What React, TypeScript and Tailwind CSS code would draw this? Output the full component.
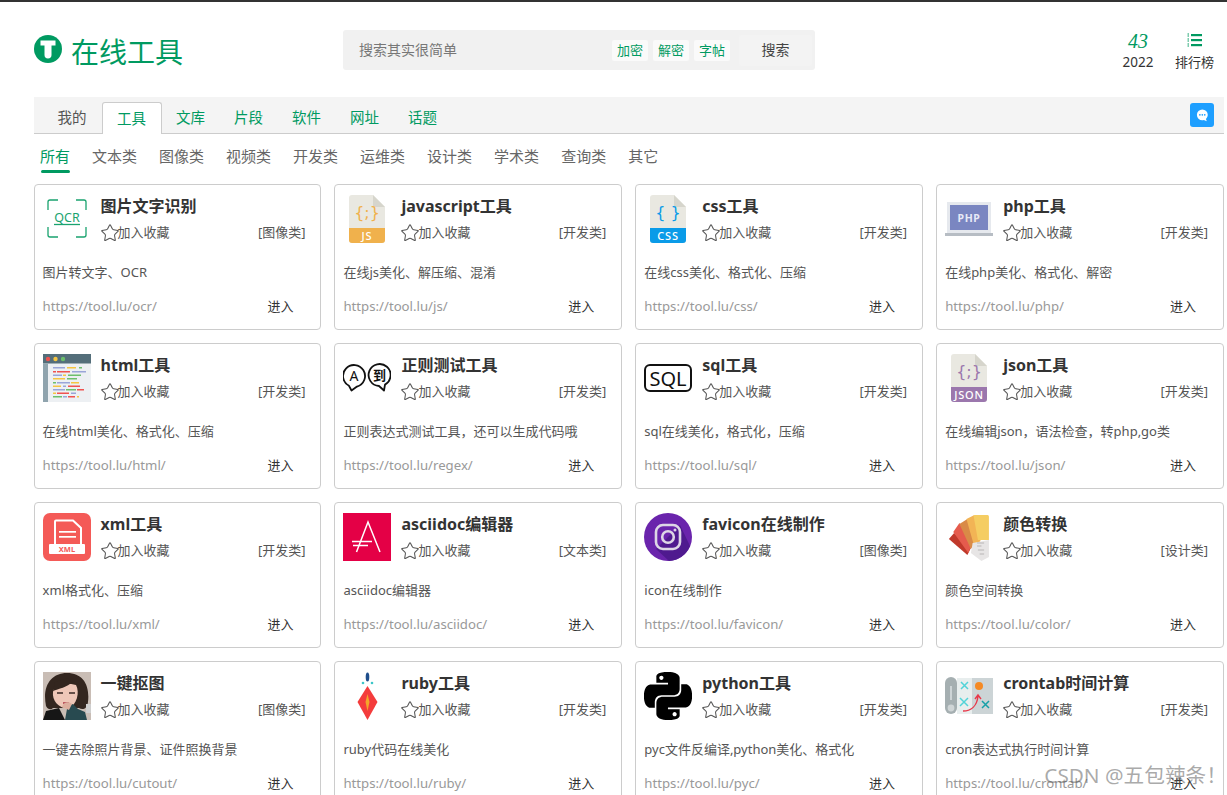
import { Star } from "lucide-react";
import { SiPython } from "react-icons/si";

const FONT = "font-['Noto_Sans','Noto_Sans_CJK_SC',sans-serif]";

const TABS = ["我的", "工具", "文库", "片段", "软件", "网址", "话题"];
const CATS = ["所有", "文本类", "图像类", "视频类", "开发类", "运维类", "设计类", "学术类", "查询类", "其它"];

function FileIcon({ bar, glyph, label, text }: { bar: string; glyph: string; label: string; text: string }) {
  return (
    <svg viewBox="0 0 48 48" className="size-12">
      <path d="M6 0H30L42 12V45a3 3 0 0 1-3 3H9a3 3 0 0 1-3-3V3a3 3 0 0 1 3-3Z" fill="#e9e8e1" />
      <path d="M30 0L42 12H30Z" fill="#d6d5cc" />
      <path d="M6 33H42V45a3 3 0 0 1-3 3H9a3 3 0 0 1-3-3Z" fill={bar} />
      <text x="24" y="23" textAnchor="middle" fontSize="16" fill={glyph} fontFamily="'DejaVu Sans',sans-serif">
        {text}
      </text>
      <text x="24" y="45" textAnchor="middle" fontSize="11" fontWeight="500" fill="#fff" letterSpacing="0.8" fontFamily="'Noto Sans',sans-serif">
        {label}
      </text>
    </svg>
  );
}

function OcrIcon() {
  return (
    <svg viewBox="0 0 48 48" className="size-12" fill="none" stroke="#1aa36f" strokeWidth="1.3">
      <path d="M5 15V7a2 2 0 0 1 2-2H15M33 5H41a2 2 0 0 1 2 2V15M5 32V40a2 2 0 0 0 2 2H15M33 42H41a2 2 0 0 0 2-2V32" />
      <text x="24" y="27" textAnchor="middle" fontSize="12.5" fill="#1aa36f" stroke="none" fontFamily="'Noto Sans',sans-serif">
        QCR
      </text>
      <path d="M11 29.5H37" />
    </svg>
  );
}

function PhpIcon() {
  return (
    <svg viewBox="0 0 48 48" className="size-12">
      <rect x="2" y="7" width="44" height="31" fill="#e6e9ee" />
      <rect x="5" y="10" width="38" height="25" fill="#7a86c1" />
      <rect x="0" y="38" width="48" height="3" fill="#b7bdc4" />
      <text x="24" y="27" textAnchor="middle" fontSize="10.5" fontWeight="700" fill="#e8eaf6" letterSpacing="0.6" fontFamily="'Noto Sans',sans-serif">
        PHP
      </text>
    </svg>
  );
}

const CODE_LINES: [number, number, string][] = [
  [10, 12, "#9aa5d8"], [24, 9, "#f5c542"], [36, 3, "#6cbf6c"],
  [10, 3, "#ef5350"], [14, 13, "#ef5350"], [29, 14, "#9aa5d8"],
  [10, 9, "#9aa5d8"], [20, 3, "#f5c542"], [25, 13, "#6cbf6c"],
  [10, 12, "#f5c542"], [24, 10, "#6cbf6c"],
  [10, 3, "#6cbf6c"], [14, 13, "#9aa5d8"], [28, 8, "#f5c542"],
  [10, 8, "#f5c542"], [20, 3, "#9aa5d8"], [25, 12, "#ef5350"],
  [10, 12, "#9aa5d8"], [23, 10, "#6cbf6c"], [34, 7, "#ef5350"],
  [10, 3, "#f5c542"], [14, 12, "#ef5350"], [28, 5, "#9aa5d8"],
  [10, 9, "#6cbf6c"], [20, 4, "#9aa5d8"], [25, 7, "#ef5350"], [34, 2, "#f5c542"],
];
const CODE_Y = [13, 13, 13, 17, 17, 17, 20.5, 20.5, 20.5, 24, 24, 28, 28, 28, 31.5, 31.5, 31.5, 35, 35, 35, 38.5, 38.5, 38.5, 42, 42, 42, 42];

function HtmlIcon() {
  return (
    <svg viewBox="0 0 48 48" className="size-12">
      <rect width="48" height="48" fill="#edf0f3" />
      <rect width="48" height="9.5" fill="#546e7a" />
      <rect y="9.5" width="5" height="38.5" fill="#90a4ae" />
      <circle cx="5" cy="5" r="2.2" fill="#ef5350" />
      <circle cx="12.5" cy="5" r="2.2" fill="#f5c542" />
      <circle cx="20" cy="5" r="2.2" fill="#6cbf6c" />
      {CODE_LINES.map(([x, w, c], i) => (
        <rect key={i} x={x} y={CODE_Y[i]} width={w} height="1.5" fill={c} />
      ))}
    </svg>
  );
}

function RegexIcon() {
  return (
    <svg viewBox="0 0 48 48" className="size-12" fill="none" stroke="#111" strokeWidth="1.8" strokeLinejoin="round">
      <path d="M6 31.8A11 11 0 1 1 14 32.6L8.5 36.5Z" />
      <path d="M36 32A11 11 0 1 1 42 30.6L41 36.5Z" />
      <text x="11" y="27" textAnchor="middle" fontSize="14" fill="#111" stroke="none" fontFamily="'Noto Sans',sans-serif">
        A
      </text>
      <text x="36.5" y="26" textAnchor="middle" fontSize="13" fontWeight="700" fill="#111" stroke="none" fontFamily="'Noto Sans CJK SC',sans-serif">
        到
      </text>
    </svg>
  );
}

function SqlIcon() {
  return (
    <svg viewBox="0 0 48 48" className="size-12">
      <rect x="1" y="11" width="46" height="26" rx="5" fill="none" stroke="#111" strokeWidth="2" />
      <text x="24" y="31.5" textAnchor="middle" fontSize="20" fill="#111" fontFamily="'Noto Sans',sans-serif">
        SQL
      </text>
    </svg>
  );
}

function XmlIcon() {
  return (
    <svg viewBox="0 0 48 48" className="size-12">
      <rect width="48" height="48" rx="7" fill="#f45a57" />
      <path d="M12 31V8.5a1 1 0 0 1 1-1H30L38 15V31" fill="none" stroke="#fff" strokeWidth="2" />
      <rect x="16" y="18" width="17" height="1.7" fill="#fff" />
      <rect x="16" y="23" width="17" height="1.7" fill="#fff" />
      <rect x="6" y="31" width="36" height="10" rx="1" fill="#fff" />
      <text x="24" y="39" textAnchor="middle" fontSize="7.5" fontWeight="700" fill="#f45a57" fontFamily="'Noto Sans',sans-serif">
        XML
      </text>
    </svg>
  );
}

function AsciidocIcon() {
  return (
    <svg viewBox="0 0 48 48" className="size-12">
      <rect width="48" height="48" fill="#e40046" />
      <path d="M13.5 39L25 9L37 39M9 28.5H29M10 32.5H25" fill="none" stroke="#fff" strokeWidth="1.5" />
    </svg>
  );
}

function FaviconIcon() {
  return (
    <svg viewBox="0 0 48 48" className="size-12">
      <circle cx="24" cy="24" r="24" fill="#6a24ac" />
      <path d="M36 12L46 33A24 24 0 0 1 25 48L12 36Z" fill="#4f1a8f" />
      <rect x="12" y="12" width="24" height="24" rx="7" fill="none" stroke="#ddd6e6" strokeWidth="2.6" />
      <circle cx="24" cy="24" r="5.8" fill="none" stroke="#ddd6e6" strokeWidth="2.6" />
      <circle cx="31" cy="17" r="1.5" fill="#ddd6e6" />
    </svg>
  );
}

function ColorIcon() {
  return (
    <svg viewBox="0 0 48 48" className="size-12">
      <g transform="translate(3 0) scale(.88 1)">
        <path d="M1 26L7 20L26 35L22 42Z" fill="#c0392b" />
        <path d="M6 19L13 10L28 30L23 40Z" fill="#e55b4d" />
        <path d="M13 11L22 6L32 30L26 36Z" fill="#d98a47" />
        <path d="M21 6L30 2L37 28L30 34Z" fill="#f2b455" />
        <path d="M29 2.5a2 2 0 0 1 2-.5H45a1.5 1.5 0 0 1 1.5 1.5V27H34Z" fill="#f5cd62" />
        <path d="M28 30L46.5 27V44L38 48L26 40Z" fill="#e7e5e5" />
        <path d="M33 30H41M33 33H38M34 37H41M36 41H41" stroke="#b5b2b2" strokeWidth="1" />
      </g>
    </svg>
  );
}

function PhotoIcon() {
  return (
    <svg viewBox="0 0 48 48" className="size-12">
      <rect width="48" height="48" fill="#c9bdb5" />
      <path d="M3 34C-1 14 8 1 24 1C40 1 47 13 45 30C44 38 39 38 36 36H10C8 38 5 38 3 34Z" fill="#33261f" />
      <path d="M10 20C11 12 22 10 33 13C37 20 34 33 25 37C15 36 9 28 10 20Z" fill="#eec7b8" />
      <path d="M10 19C15 17 25 15 29 10L33 13L24 6L12 10Z" fill="#33261f" />
      <path d="M14 21H20M26 21H32" stroke="#3a2a25" strokeWidth="1.5" />
      <path d="M20 31H26" stroke="#b8505a" strokeWidth="1.8" />
      <path d="M0 48L3 39L16 36L22 48Z" fill="#161616" />
      <path d="M24 37L24 34L30 32L35 37L42 40L44 48H22Z" fill="#284a50" />
      <rect x="43" y="32" width="5" height="9" fill="#cfcfcf" />
      <path d="M19 35C20 30 26 29 29 32L26 38Z" fill="#dcae9e" />
    </svg>
  );
}

function RubyIcon() {
  return (
    <svg viewBox="0 0 48 48" className="size-12">
      <ellipse cx="24.5" cy="5" rx="1.8" ry="4.6" fill="#1f4e8c" />
      <circle cx="20" cy="11" r="1.3" fill="#3cc6c8" />
      <circle cx="29" cy="11" r="1.3" fill="#3cc6c8" />
      <path d="M24.5 14L34.5 30L24.5 48L14.5 30Z" fill="#f43c3c" />
      <path d="M24.5 22L26.5 30L24.5 39L22.5 30Z" fill="#f4a62a" />
    </svg>
  );
}

function CronIcon() {
  return (
    <svg viewBox="0 0 48 48" className="size-12">
      <rect x="0" y="5" width="12" height="37" rx="6" fill="#a5afb1" />
      <circle cx="6" cy="36" r="3.4" fill="#cfd5d6" />
      <rect x="5.3" y="14" width="1.4" height="14" fill="#dfe4e5" />
      <rect x="12" y="6" width="15" height="36" fill="#e8eeee" />
      <rect x="27" y="6" width="21" height="36" fill="#ccd4d6" />
      <circle cx="34" cy="14" r="4" fill="#f58a24" />
      <path d="M16 10L23 17M23 10L16 17M15 26L23 34M23 26L15 34" stroke="#52d3d8" strokeWidth="1.5" />
      <path d="M37 29L44 36M44 29L37 36" stroke="#17a0a8" strokeWidth="1.5" />
      <path d="M18 39C26 39 32 34 33 24M30 27L33 23L36 27" fill="none" stroke="#e8384a" strokeWidth="1.4" />
    </svg>
  );
}

interface Tool {
  name: string;
  cat: string;
  desc: string;
  url: string;
  icon: React.ReactNode;
}

const TOOLS: Tool[] = [
  { name: "图片文字识别", cat: "[图像类]", desc: "图片转文字、OCR", url: "https://tool.lu/ocr/", icon: <OcrIcon /> },
  { name: "javascript工具", cat: "[开发类]", desc: "在线js美化、解压缩、混淆", url: "https://tool.lu/js/", icon: <FileIcon bar="#f0b14c" glyph="#f0b14c" label="JS" text="{;}" /> },
  { name: "css工具", cat: "[开发类]", desc: "在线css美化、格式化、压缩", url: "https://tool.lu/css/", icon: <FileIcon bar="#0a9be8" glyph="#0a9be8" label="CSS" text="{ }" /> },
  { name: "php工具", cat: "[开发类]", desc: "在线php美化、格式化、解密", url: "https://tool.lu/php/", icon: <PhpIcon /> },
  { name: "html工具", cat: "[开发类]", desc: "在线html美化、格式化、压缩", url: "https://tool.lu/html/", icon: <HtmlIcon /> },
  { name: "正则测试工具", cat: "[开发类]", desc: "正则表达式测试工具，还可以生成代码哦", url: "https://tool.lu/regex/", icon: <RegexIcon /> },
  { name: "sql工具", cat: "[开发类]", desc: "sql在线美化，格式化，压缩", url: "https://tool.lu/sql/", icon: <SqlIcon /> },
  { name: "json工具", cat: "[开发类]", desc: "在线编辑json，语法检查，转php,go类", url: "https://tool.lu/json/", icon: <FileIcon bar="#9b77ad" glyph="#9b77ad" label="JSON" text="{;}" /> },
  { name: "xml工具", cat: "[开发类]", desc: "xml格式化、压缩", url: "https://tool.lu/xml/", icon: <XmlIcon /> },
  { name: "asciidoc编辑器", cat: "[文本类]", desc: "asciidoc编辑器", url: "https://tool.lu/asciidoc/", icon: <AsciidocIcon /> },
  { name: "favicon在线制作", cat: "[图像类]", desc: "icon在线制作", url: "https://tool.lu/favicon/", icon: <FaviconIcon /> },
  { name: "颜色转换", cat: "[设计类]", desc: "颜色空间转换", url: "https://tool.lu/color/", icon: <ColorIcon /> },
  { name: "一键抠图", cat: "[图像类]", desc: "一键去除照片背景、证件照换背景", url: "https://tool.lu/cutout/", icon: <PhotoIcon /> },
  { name: "ruby工具", cat: "[开发类]", desc: "ruby代码在线美化", url: "https://tool.lu/ruby/", icon: <RubyIcon /> },
  { name: "python工具", cat: "[开发类]", desc: "pyc文件反编译,python美化、格式化", url: "https://tool.lu/pyc/", icon: <SiPython className="size-12 text-black" /> },
  { name: "crontab时间计算", cat: "[开发类]", desc: "cron表达式执行时间计算", url: "https://tool.lu/crontab/", icon: <CronIcon /> },
];

function ToolCard({ tool }: { tool: Tool }) {
  return (
    <div className="h-[146px] rounded-[4px] border border-[#ccc] bg-white pl-2 pr-[15px] pt-2">
      <div className="flex h-12">
        <div className="mt-[2px] size-12 shrink-0">{tool.icon}</div>
        <div className="ml-[10px] min-w-0 flex-1">
          <div className="h-[27px] text-[16px] leading-[26px] font-bold text-[#333]">{tool.name}</div>
          <div className="flex h-[26px] items-center justify-between text-[13px] text-[#555]">
            <span className="flex items-center">
              <Star size={20} strokeWidth={1.25} className="-ml-[1px] -mr-[2px] text-[#555]" />
              {"加入收藏"}
            </span>
            <span>{tool.cat}</span>
          </div>
        </div>
      </div>
      <div className="mt-[21px] h-[20px] text-[13px] leading-[20px] whitespace-nowrap text-[#555]">{tool.desc}</div>
      <div className="mt-[14px] flex items-center justify-between">
        <span className="text-[13.2px] leading-[20px] text-[#999]">{tool.url}</span>
        <span className="mr-[12px] text-[13px] leading-[20px] text-[#333]">进入</span>
      </div>
    </div>
  );
}

export default function App() {
  return (
    <div className={`relative h-[795px] w-[1227px] overflow-hidden bg-white ${FONT}`}>
      <div className="h-[2px] bg-[#333]" />

      <header className="flex h-[95px] pl-[34px]">
        <div className="flex h-[100px] w-[309px] items-center">
          <svg viewBox="0 0 28 28" className="size-7 -translate-y-[3px]">
            <circle cx="14" cy="14" r="14" fill="#009a61" />
            <path d="M6.5 5.5H21.5V10.5H17.5V20a3.5 3.5 0 0 1-7 0V10.5H6.5Z" fill="#fff" />
          </svg>
          <span className="ml-[9px] text-[28px] leading-none text-[#009a61]">在线工具</span>
        </div>

        <div className="mt-[28px] flex h-10 w-[472px] items-center rounded-[3px] bg-[#f1f1f1] pl-[16px] pr-[3px] text-[14px] text-[#777]">
          <span className="flex-1 pb-[2px]">搜索其实很简单</span>
          <div className="mt-[1px] flex gap-[5px] text-[13px] text-[#009a61]">
            <span className="flex h-[21px] w-[36px] items-center justify-center rounded-[2px] bg-[#fafafa]">加密</span>
            <span className="flex h-[21px] w-[36px] items-center justify-center rounded-[2px] bg-[#fafafa]">解密</span>
            <span className="flex h-[21px] w-[36px] items-center justify-center rounded-[2px] bg-[#fafafa]">字帖</span>
          </div>
          <span className="ml-[9px] flex h-[31px] w-[73px] items-center justify-center rounded-[2px] bg-[#f3f3f3] pb-[1px] text-[#444]">搜索</span>
        </div>

        <div className="ml-[308px] mt-[30px] flex h-[40px] w-[30px] flex-col items-center whitespace-nowrap">
          <span className="font-['Liberation_Serif',serif] text-[20px] leading-[18px] text-[#009a61] italic">43</span>
          <span className="mt-[2px] text-[13.5px] leading-[20px] text-[#333]">2022</span>
        </div>
        <div className="ml-[22px] mt-[30px] flex h-[40px] w-[39px] flex-col items-center whitespace-nowrap">
          <svg viewBox="0 0 16 16" className="size-[16px] -translate-x-[1px]" fill="#009a61">
            <rect x="5" y="2" width="11" height="2.2" />
            <rect x="5" y="7" width="11" height="2.2" />
            <rect x="5" y="12" width="11" height="2.2" />
            <rect x="1.5" y="1.5" width="1.5" height="1" />
            <rect x="1.5" y="3.5" width="1.5" height="1" />
            <rect x="1.5" y="6.5" width="1.5" height="1" />
            <rect x="1.5" y="8.5" width="1.5" height="1" />
            <rect x="1.5" y="11.5" width="1.5" height="1" />
            <rect x="1.5" y="13.5" width="1.5" height="1" />
          </svg>
          <span className="mt-[4px] text-[13px] leading-[20px] text-[#333]">排行榜</span>
        </div>
      </header>

      <nav className="mx-[34px] flex h-[37px] w-[1190px] items-end border-b border-[#ccc] bg-[#f4f4f4] pl-[8.5px] text-[14.5px]">
        {TABS.map((t, i) => (
          <div
            key={t}
            className={
              i === 1
                ? "relative -mb-px flex h-[32px] w-[60px] items-center justify-center rounded-t-[3px] border border-b-0 border-[#ccc] bg-white text-[#009a61]"
                : i === 0
                  ? "flex h-[31px] w-[59px] items-center justify-center text-[#555]"
                  : "flex h-[31px] w-[58px] items-center justify-center text-[#009a61]"
            }
          >
            {t}
          </div>
        ))}
        <div className="mb-[6px] ml-auto mr-[10px] flex size-6 items-center justify-center rounded-[3px] bg-[#1e9fff]">
          <svg viewBox="0 0 16 16" className="size-[15px]">
            <path d="M7.8 1.5a5.8 5.8 0 0 1 5.8 5.8c0 1.9-.8 3.3-2 4.3l1 2.4-3.2-1.2a6 6 0 0 1-1.6.3 5.8 5.8 0 0 1 0-11.6Z" fill="#fff" />
            <circle cx="5.2" cy="7.3" r=".9" fill="#1e9fff" />
            <circle cx="7.8" cy="7.3" r=".9" fill="#1e9fff" />
            <circle cx="10.4" cy="7.3" r=".9" fill="#1e9fff" />
          </svg>
        </div>
      </nav>

      <div className="ml-[40px] mt-[9px] flex h-[41px] gap-[22px] text-[15px] leading-[26px] text-[#666]">
        {CATS.map((c, i) => (
          <div key={c} className={i === 0 ? "relative text-[#009a61]" : ""}>
            {c}
            {i === 0 && <div className="absolute left-px right-0 top-[27px] h-[3px] rounded-full bg-[#009a61]" />}
          </div>
        ))}
      </div>

      <div className="ml-[33.6px] grid w-[1190.4px] grid-cols-4 gap-[13px]">
        {TOOLS.map((t) => (
          <ToolCard key={t.url} tool={t} />
        ))}
      </div>

      <div className="absolute bottom-[6px] right-0 text-[20.7px] leading-[28px] whitespace-nowrap text-[#555]/50">
        CSDN @五包辣条！
      </div>
    </div>
  );
}
